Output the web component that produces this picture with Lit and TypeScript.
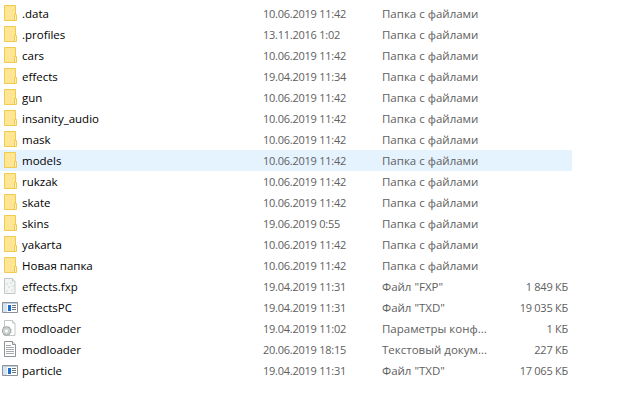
import {css, html, LitElement, svg} from 'lit';
import {customElement} from 'lit/decorators.js';

type Kind = 'folder' | 'blank' | 'txd' | 'config' | 'text';

interface Row {
  name: string;
  date: string;
  type: string;
  size?: string;
  kind: Kind;
}

const FOLDER_TYPE = 'Папка с файлами';

const rows: Row[] = [
  {name: '.data', date: '10.06.2019 11:42', type: FOLDER_TYPE, kind: 'folder'},
  {name: '.profiles', date: '13.11.2016 1:02', type: FOLDER_TYPE, kind: 'folder'},
  {name: 'cars', date: '10.06.2019 11:42', type: FOLDER_TYPE, kind: 'folder'},
  {name: 'effects', date: '19.04.2019 11:34', type: FOLDER_TYPE, kind: 'folder'},
  {name: 'gun', date: '10.06.2019 11:42', type: FOLDER_TYPE, kind: 'folder'},
  {name: 'insanity_audio', date: '10.06.2019 11:42', type: FOLDER_TYPE, kind: 'folder'},
  {name: 'mask', date: '10.06.2019 11:42', type: FOLDER_TYPE, kind: 'folder'},
  {name: 'models', date: '10.06.2019 11:42', type: FOLDER_TYPE, kind: 'folder'},
  {name: 'rukzak', date: '10.06.2019 11:42', type: FOLDER_TYPE, kind: 'folder'},
  {name: 'skate', date: '10.06.2019 11:42', type: FOLDER_TYPE, kind: 'folder'},
  {name: 'skins', date: '19.06.2019 0:55', type: FOLDER_TYPE, kind: 'folder'},
  {name: 'yakarta', date: '10.06.2019 11:42', type: FOLDER_TYPE, kind: 'folder'},
  {name: 'Новая папка', date: '10.06.2019 11:42', type: FOLDER_TYPE, kind: 'folder'},
  {name: 'effects.fxp', date: '19.04.2019 11:31', type: 'Файл "FXP"', size: '1 849 КБ', kind: 'blank'},
  {name: 'effectsPC', date: '19.04.2019 11:31', type: 'Файл "TXD"', size: '19 035 КБ', kind: 'txd'},
  {name: 'modloader', date: '19.04.2019 11:02', type: 'Параметры конф...', size: '1 КБ', kind: 'config'},
  {name: 'modloader', date: '20.06.2019 18:15', type: 'Текстовый докум...', size: '227 КБ', kind: 'text'},
  {name: 'particle', date: '19.04.2019 11:31', type: 'Файл "TXD"', size: '17 065 КБ', kind: 'txd'},
];

const icons: Record<Kind, unknown> = {
  folder: svg`
    <path d="M2.500 .5h11v15h-11z" fill="#ffe594" stroke="#f1cb4e"/>
    <path d="M12.500 15.500v-6h2v6z" fill="#fff0c0" stroke="#f1cb4e"/>`,
  blank: svg`
    <path d="M2.500 .5h8l2.500 2.500v12.500h-10.500z" fill="#f2f5f4" stroke="#c2c6ca"/>
    <path d="M10.500 .5v2.500h2.500" fill="#fff" stroke="#c2c6ca"/>
    <path d="M4 5h2v2h-2zM8 4h2v2h-2zM6 8h2v2h-2zM10 7h2v2h-2zM4 12h2v2h-2zM9 11h2v2h-2z" fill="#dde8e3"/>`,
  txd: svg`
    <path d="M.5 3.500h15v10h-15z" fill="#fff" stroke="#8a9199"/>
    <path d="M1 4h14v1h-14z" fill="#bcd0e4"/>
    <path d="M1 5h4v8h-4z" fill="#d6e4f1"/>
    <path d="M6 6h3v6h-3z" fill="#1a70cc"/>
    <path d="M10 6.500h4M10 8.500h4M10 10.500h4" stroke="#6c7680" fill="none"/>`,
  config: svg`
    <path d="M2.500 .5h8l2.500 2.500v12.500h-10.500z" fill="#fff" stroke="#c2c6ca"/>
    <path d="M10.500 .5v2.500h2.500" fill="#eee" stroke="#c2c6ca"/>
    <path d="M4.500 6l1 1.300 1.700-.3.400 1.600 1.500.8-.5 1.500.5 1.500-1.500.8-.4 1.600-1.700-.3-1 1.300-1-1.300-1.700.3-.4-1.600-1.200-.8.300-1.500-.3-1.500 1.200-.8.400-1.600 1.700.3z" fill="#c9d2cd" stroke="#9aa6a0"/>
    <circle cx="4.500" cy="11" r="1.500" fill="#fff"/>`,
  text: svg`
    <path d="M2.500 .5h8l3 3v12h-11z" fill="#fff" stroke="#8c9298"/>
    <path d="M10.500 .5v3h3" fill="#eee" stroke="#8c9298"/>
    <path d="M4 4.500h5M4 6.500h8M4 8.500h8M4 10.500h8M4 12.500h8" stroke="#a4a9ae" fill="none"/>`,
};

@customElement('app-root')
export class AppRoot extends LitElement {
  static override styles = css`
    :host {
      display: block;
      width: 617px;
      height: 412px;
      background: #fff;
      font-family: 'Open Sans', 'Noto Sans', sans-serif;
      font-size: 11.5px;
      overflow: hidden;
    }

    .list {
      width: 572px;
      padding-top: 3px;
    }

    .row {
      display: grid;
      grid-template-columns: 263px 119px 116px 70px;
      height: 21px;
      line-height: 21px;
      white-space: nowrap;
    }

    .row.hover {
      background: #e5f3ff;
    }

    .name {
      display: flex;
      align-items: center;
      gap: 2px;
      color: #000;
      padding-left: 2px;
    }

    .name svg {
      flex: none;
      display: block;
    }

    .date,
    .type,
    .size {
      color: #606060;
    }

    .date,
    .size {
      font-size: 11px;
      letter-spacing: -0.25px;
    }

    .size {
      text-align: right;
    }
  `;

  override render() {
    return html`
      <div class="list">
        ${rows.map(
          (r) => html`
            <div class="row ${r.name === 'models' ? 'hover' : ''}">
              <div class="name">
                <svg width="18" height="17" viewBox="0 0 18 17">${icons[r.kind]}</svg>
                <span>${r.name}</span>
              </div>
              <div class="date">${r.date}</div>
              <div class="type">${r.type}</div>
              <div class="size">${r.size ?? ''}</div>
            </div>
          `,
        )}
      </div>
    `;
  }
}
